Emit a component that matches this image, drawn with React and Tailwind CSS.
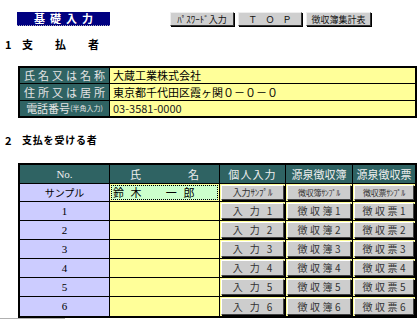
import React from 'react';

const jp = { fontFamily: '"MS PGothic", "Noto Sans CJK JP", "Noto Sans", sans-serif' };

const payer = [
  { label: '氏名又は名称', value: '大蔵工業株式会社', h: 'h-[16px]' },
  { label: '住所又は居所', value: '東京都千代田区霞ヶ関０－０－０', h: 'h-[17px]' },
];

const rows = ['1', '2', '3', '4', '5', '6'];

const CellButton = ({ children }) => (
  <div className="h-full p-[1px]">
    <div className="h-full flex items-center justify-center bg-[#cdcdcd] border border-[#404040] border-t-white border-l-white shadow-[1px_1px_0_#000] text-[10px] text-[#333] whitespace-nowrap overflow-hidden">
      {children}
    </div>
  </div>
);

const NavButton = ({ children, w }) => (
  <button className={`${w} h-[14px] flex items-center justify-center bg-[#cfcfcf] border border-[#333] border-t-[#eee] border-l-[#eee] shadow-[1px_1px_0_#000] text-[9px] leading-none text-[#111]`}>
    {children}
  </button>
);

export default function App() {
  return (
    <div className="w-[419px] h-[319px] overflow-hidden bg-white text-black" style={jp}>
      {/* header */}
      <div className="flex items-center pt-[12px] pl-[17px]">
        <div className="w-[93px] h-[14px] flex items-center justify-center pl-[5px] bg-[#000080] border-b border-dotted border-[#aab] text-white text-[11px] font-bold tracking-[0.45em] leading-none">
          基礎入力
        </div>
        <div className="flex gap-[4px] ml-[60px]">
          <NavButton w="w-[64px]">ﾊﾟｽﾜｰﾄﾞ入力</NavButton>
          <NavButton w="w-[64px]"><span className="tracking-[0.9em] pl-[8px]">ＴＯＰ</span></NavButton>
          <NavButton w="w-[65px]">徴収簿集計表</NavButton>
        </div>
      </div>

      <div className="mt-[13px] pl-[5px] text-[11px] font-bold leading-none flex">
        <span className="w-[17px]">1</span>
        <span className="tracking-[2em]">支払者</span>
      </div>

      {/* payer table */}
      <div className="mt-[16px] ml-[18px] w-[399px] border-2 border-black grid grid-cols-[90px_1fr] text-[11px] leading-none">
        {payer.map((r) => (
          <React.Fragment key={r.label}>
            <div className={`${r.h} bg-[#2f6363] text-[#e4e4e4] flex items-center justify-center whitespace-nowrap pl-[3px] tracking-[0.27em] border-b border-black border-r`}>{r.label}</div>
            <div className={`${r.h} bg-[#ffff99] flex items-center pl-[3px] border-b border-black`}>{r.value}</div>
          </React.Fragment>
        ))}
        <div className="h-[15px] bg-[#2f6363] text-[#e4e4e4] flex items-center justify-center whitespace-nowrap border-r border-black">
          電話番号<span className="text-[7px]">(半角入力)</span>
        </div>
        <div className="h-[15px] bg-[#ffff99] flex items-center pl-[3px] text-[#222]">03-3581-0000</div>
      </div>

      <div className="mt-[17px] pl-[5px] text-[10px] font-bold leading-none flex">
        <span className="w-[17px] text-[11px]">2</span>
        <span className="tracking-[0.08em]">支払を受ける者</span>
      </div>

      {/* payee table */}
      <div className="mt-[17px] ml-[18px] w-[399px] border-2 border-black grid grid-cols-[90px_110px_66px_67px_1fr] text-[11px] leading-none">
        <div className="h-[19px] bg-[#2f6363] text-[#eee] flex items-center justify-center border-r border-b border-black" style={{ fontFamily: '"Liberation Serif", serif' }}>No.</div>
        <div className="h-[19px] bg-[#2f6363] text-[#eee] flex items-center justify-between px-[20px] border-r border-b border-black"><span>氏</span><span>名</span></div>
        <div className="h-[19px] bg-[#2f6363] text-[#eee] flex items-center justify-center tracking-[0.1em] border-r border-b border-black">個人入力</div>
        <div className="h-[19px] bg-[#2f6363] text-[#eee] flex items-center justify-center border-r border-b border-black">源泉徴収簿</div>
        <div className="h-[19px] bg-[#2f6363] text-[#eee] flex items-center justify-center border-b border-black">源泉徴収票</div>

        <div className="h-[18px] bg-[#ccccff] flex items-center justify-center text-[10px] border-r border-b border-black">サンプル</div>
        <div className="h-[18px] bg-[#ffff99] border-r border-b border-black p-[1px]">
          <div className="h-full bg-[#ccffcc] border border-black border-dotted flex items-center pl-[1px] tracking-[0.6em]">鈴木　一郎</div>
        </div>
        <div className="h-[18px] bg-[#ffff99] border-r border-b border-black"><CellButton><span className="text-[9px] tracking-[-0.02em]">入力ｻﾝﾌﾟﾙ</span></CellButton></div>
        <div className="h-[18px] bg-[#ffff99] border-r border-b border-black"><CellButton><span className="text-[8px] tracking-[-0.04em]">徴収簿ｻﾝﾌﾟﾙ</span></CellButton></div>
        <div className="h-[18px] bg-[#ffff99] border-b border-black"><CellButton><span className="text-[8px] tracking-[-0.04em]">徴収票ｻﾝﾌﾟﾙ</span></CellButton></div>

        {rows.map((n, i) => {
          const b = i === rows.length - 1 ? '' : 'border-b';
          return (
            <React.Fragment key={n}>
              <div className={`h-[19px] bg-[#ccccff] flex items-center justify-center text-[11px] border-r ${b} border-black`} style={{ fontFamily: '"Liberation Serif", serif' }}>{n}</div>
              <div className={`h-[19px] bg-[#ffff99] border-r ${b} border-black`} />
              <div className={`h-[19px] bg-[#ffff99] border-r ${b} border-black`}><CellButton><span className="tracking-[0.7em]">入力</span>{n}</CellButton></div>
              <div className={`h-[19px] bg-[#ffff99] border-r ${b} border-black`}><CellButton><span className="tracking-[0.25em]">徴収簿</span>{n}</CellButton></div>
              <div className={`h-[19px] bg-[#ffff99] ${b} border-black`}><CellButton><span className="tracking-[0.25em]">徴収票</span>{n}</CellButton></div>
            </React.Fragment>
          );
        })}
      </div>
      <div className="w-[65px] h-[3px] bg-[#b0b0b0]" />
    </div>
  );
}
